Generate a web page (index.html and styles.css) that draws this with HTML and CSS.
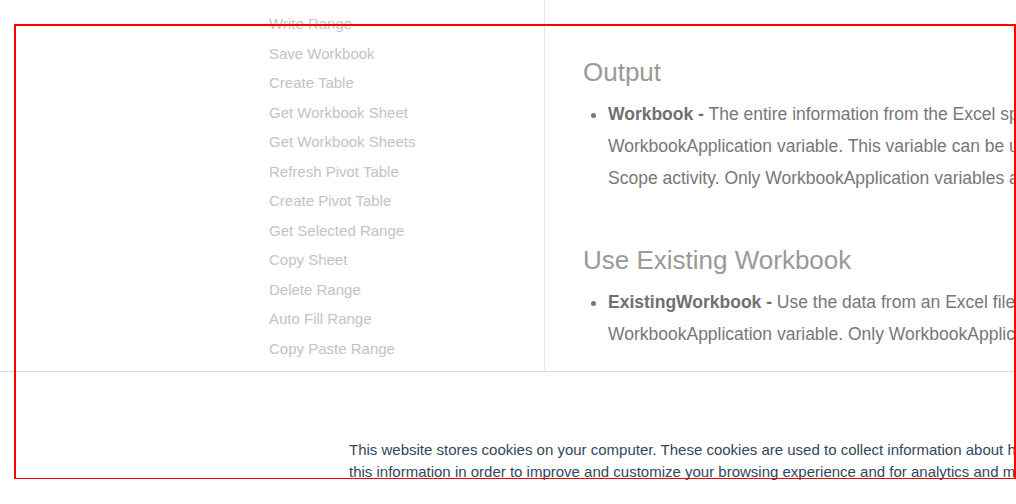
FILE: index.html
```html
<!DOCTYPE html>
<html lang="en">
<head>
<meta charset="utf-8">
<title>Excel Application Scope</title>
<link rel="stylesheet" href="styles.css">
</head>
<body>
<div class="page">
  <div class="layout">
    <nav class="sidebar">
      <ul class="nav-list">
        <li><a href="#">Write Range</a></li>
        <li><a href="#">Save Workbook</a></li>
        <li><a href="#">Create Table</a></li>
        <li><a href="#">Get Workbook Sheet</a></li>
        <li><a href="#">Get Workbook Sheets</a></li>
        <li><a href="#">Refresh Pivot Table</a></li>
        <li><a href="#">Create Pivot Table</a></li>
        <li><a href="#">Get Selected Range</a></li>
        <li><a href="#">Copy Sheet</a></li>
        <li><a href="#">Delete Range</a></li>
        <li><a href="#">Auto Fill Range</a></li>
        <li><a href="#">Copy Paste Range</a></li>
      </ul>
    </nav>
    <main class="content">
      <h2 class="section-title first">Output</h2>
      <ul class="props">
        <li><strong>Workbook -</strong> The entire information from the Excel spreadsheet is stored in a<br>WorkbookApplication variable. This variable can be used in another Excel Application<br>Scope activity. Only WorkbookApplication variables are supported.</li>
      </ul>
      <h2 class="section-title">Use Existing Workbook</h2>
      <ul class="props second">
        <li><strong>ExistingWorkbook -</strong> Use the data from an Excel file stored in a<br>WorkbookApplication variable. Only WorkbookApplication variables are supported.</li>
      </ul>
    </main>
  </div>
  <footer class="cookie">
    <p class="cookie-text">This website stores cookies on your computer. These cookies are used to collect information about how you interact with our website and allow us to remember you. We use<br>this information in order to improve and customize your browsing experience and for analytics and metrics about our visitors both on this website and other media.</p>
  </footer>
</div>
<div class="highlight"></div>
</body>
</html>
```

FILE: styles.css
```css
html, body {
  margin: 0;
  padding: 0;
  background: #ffffff;
  overflow: hidden;
}

body {
  width: 1016px;
  height: 504px;
  font-family: "Liberation Sans", Arial, sans-serif;
}

.page {
  width: 1600px;
}

.layout {
  display: flex;
  height: 372px;
  border-bottom: 1px solid #cfdce9;
  box-sizing: border-box;
}

.sidebar {
  width: 545px;
  flex: none;
  border-right: 1px solid #e6e6e6;
  box-sizing: border-box;
}

.nav-list {
  list-style: none;
  margin: 0;
  padding: 9px 0 0 269px;
}

.nav-list li {
  font-size: 15px;
  line-height: 29.55px;
  height: 29.55px;
  white-space: nowrap;
}

.nav-list a {
  color: #c3c3c3;
  text-decoration: none;
}

.content {
  flex: 1;
  padding-left: 38px;
}

.section-title {
  margin: 51px 0 0;
  font-size: 26px;
  line-height: 30px;
  font-weight: normal;
  color: #999999;
}

.section-title.first {
  margin-top: 56.5px;
}

.props {
  margin: 11px 0 0;
  padding: 0 0 0 25px;
  list-style: disc;
  color: #777777;
  font-size: 17.5px;
  line-height: 32px;
  white-space: nowrap;
}

.props.second {
  margin-top: 11px;
}

.props strong {
  color: #707070;
  font-weight: bold;
}

.cookie {
  padding: 67px 0 0 349px;
}

.cookie-text {
  margin: 0;
  font-size: 15px;
  line-height: 22px;
  color: #33475b;
  white-space: nowrap;
}

.highlight {
  position: fixed;
  left: 14px;
  top: 24px;
  width: 1002px;
  height: 455px;
  box-sizing: border-box;
  border: 2px solid #ff0000;
  border-bottom-width: 1.5px;
  pointer-events: none;
}
```
